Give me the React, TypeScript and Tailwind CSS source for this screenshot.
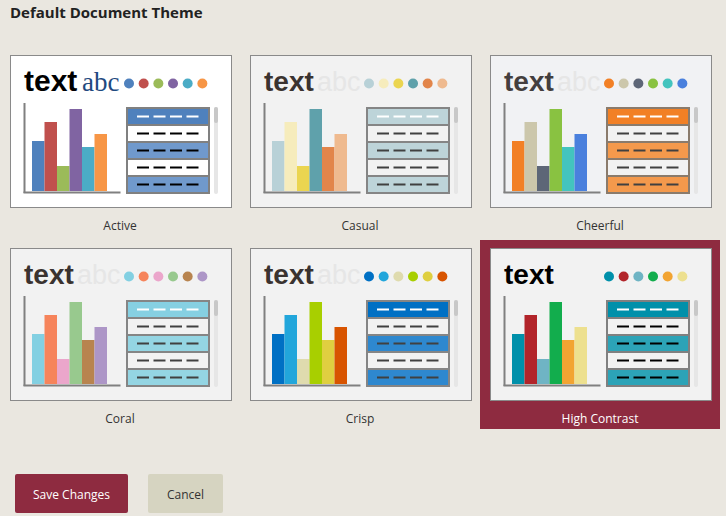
import React from 'react';

type Theme = {
  name: string;
  bg: string;
  textColor: string;
  textSize: number;
  abc?: 'serif' | 'faint';
  colors: string[];
  head: string;
  band: string;
  plain: string;
  dash: string;
  border: string;
};

const themes: Theme[] = [
  {
    name: 'Active',
    bg: '#ffffff',
    textColor: '#000000',
    textSize: 30,
    abc: 'serif',
    colors: ['#4f81bd', '#c0504d', '#9bbb59', '#8064a2', '#4bacc6', '#f79646'],
    head: '#4f81bd',
    band: '#7099cc',
    plain: '#ffffff',
    dash: '#000000',
    border: '#808080',
  },
  {
    name: 'Casual',
    bg: '#f2f2f2',
    textColor: '#3a3330',
    textSize: 28,
    abc: 'faint',
    colors: ['#b8d1d7', '#f6ecbc', '#ebd550', '#5fa1ab', '#e2854a', '#efba8f'],
    head: '#bdd4d9',
    band: '#bdd4d9',
    plain: '#f2f2f2',
    dash: '#404040',
    border: '#858585',
  },
  {
    name: 'Cheerful',
    bg: '#f1f2f4',
    textColor: '#433e3e',
    textSize: 28,
    abc: 'faint',
    colors: ['#f28025', '#ccc7ab', '#5d6677', '#89c241', '#43c4be', '#4a80dd'],
    head: '#f28025',
    band: '#f4994c',
    plain: '#f2f2f2',
    dash: '#404040',
    border: '#8a7b6c',
  },
  {
    name: 'Coral',
    bg: '#f2f2f2',
    textColor: '#3a3330',
    textSize: 28,
    abc: 'faint',
    colors: ['#83d0e2', '#f6845b', '#eba6cb', '#98c98e', '#b8844f', '#ad96c7'],
    head: '#86d0e2',
    band: '#94d5e3',
    plain: '#f2f2f2',
    dash: '#404040',
    border: '#858585',
  },
  {
    name: 'Crisp',
    bg: '#f2f2f2',
    textColor: '#3a3330',
    textSize: 28,
    abc: 'faint',
    colors: ['#0070c4', '#22a6db', '#dfdbae', '#a8cf00', '#dfcf40', '#d85400'],
    head: '#0070c4',
    band: '#2e88cf',
    plain: '#f2f2f2',
    dash: '#404040',
    border: '#858585',
  },
  {
    name: 'High Contrast',
    bg: '#f2f2f2',
    textColor: '#000000',
    textSize: 28,
    colors: ['#0090aa', '#b2242a', '#6fb4c4', '#12ad4d', '#f2a432', '#ede08f'],
    head: '#0090aa',
    band: '#2ca3b7',
    plain: '#f2f2f2',
    dash: '#000000',
    border: '#808080',
  },
];

const barHeights = [50, 69, 25, 82, 44, 57];

function Thumb({ t }: { t: Theme }) {
  return (
    <svg width="220" height="151" viewBox="0 0 220 151" className="block">
      <rect x="0" y="0" width="220" height="151" fill={t.bg} />
      <text
        x="13"
        y="35"
        fill={t.textColor}
        fontFamily="'Liberation Sans', Arial, sans-serif"
        fontWeight="700"
        fontSize={t.textSize}
      >
        text
      </text>
      {t.abc === 'serif' && (
        <text x="71" y="35" fill="#1f4a80" fontFamily="'Liberation Serif', serif" fontSize="27">
          abc
        </text>
      )}
      {t.abc === 'faint' && (
        <text x="66" y="35" fill="#e6e6e6" fontFamily="'Liberation Sans', Arial, sans-serif" fontSize="27">
          abc
        </text>
      )}
      {t.colors.map((c, i) => (
        <circle key={i} cx={118 + i * 14.67} cy="27.5" r="5" fill={c} />
      ))}
      {t.colors.map((c, i) => (
        <rect key={i} x={21 + i * 12.5} y={135 - barHeights[i]} width="12.5" height={barHeights[i]} fill={c} />
      ))}
      <rect x="12.5" y="47" width="2" height="90" fill="#808080" />
      <rect x="12.5" y="135.5" width="97" height="2" fill="#808080" />

      <rect x="115" y="51" width="84" height="87" fill={t.border} />
      {[0, 1, 2, 3, 4].map((r) => {
        const y = 53 + r * 17;
        const fill = r === 0 ? t.head : r % 2 === 1 ? t.plain : t.band;
        const dash = r === 0 ? '#ffffff' : t.dash;
        return (
          <g key={r}>
            <rect x="117" y={y} width="80" height="15" fill={fill} />
            {[126, 142.5, 159, 175.5].map((dx) => (
              <rect key={dx} x={dx} y={y + 6.5} width="12" height="2" fill={dash} />
            ))}
          </g>
        );
      })}
      <rect x="203" y="51" width="4" height="87" rx="2" fill="#e6e6e6" />
      <rect x="203" y="51" width="4" height="16" rx="2" fill="#c8c8c8" />
    </svg>
  );
}

export default function App() {
  const selected = 'High Contrast';
  return (
    <div className="w-[726px] h-[516px] bg-[#eae7e0] overflow-hidden" style={{ fontFamily: "'Open Sans', 'Noto Sans', sans-serif" }}>
      <div className="h-[47px] pl-[10px] pt-[2px] text-[15px] leading-[20px] font-bold text-[#222]">
        Default Document Theme
      </div>
      <div className="grid grid-cols-[240px_240px_240px] gap-y-[4px]">
        {themes.map((t) => {
          const isSel = t.name === selected;
          return (
            <div
              key={t.name}
              className={'h-[189px] px-[10px] pt-[8px] ' + (isSel ? 'bg-[#8e2b40]' : '')}
            >
              <div className="w-[222px] h-[153px] border border-[#8a8a8a]">
                <Thumb t={t} />
              </div>
              <div
                className={
                  'pt-[10px] text-center text-[12px] leading-[16px] ' + (isSel ? 'text-white' : 'text-[#333]')
                }
              >
                {t.name}
              </div>
            </div>
          );
        })}
      </div>
      <div className="flex gap-[20px] pl-[15px] mt-[45px]">
        <button className="w-[113px] h-[39px] pt-[2px] rounded-[2px] bg-[#8e2b40] text-white text-[12px]">
          Save Changes
        </button>
        <button className="w-[75px] h-[39px] pt-[2px] rounded-[2px] bg-[#d6d4c1] text-[#333] text-[12px]">
          Cancel
        </button>
      </div>
    </div>
  );
}
